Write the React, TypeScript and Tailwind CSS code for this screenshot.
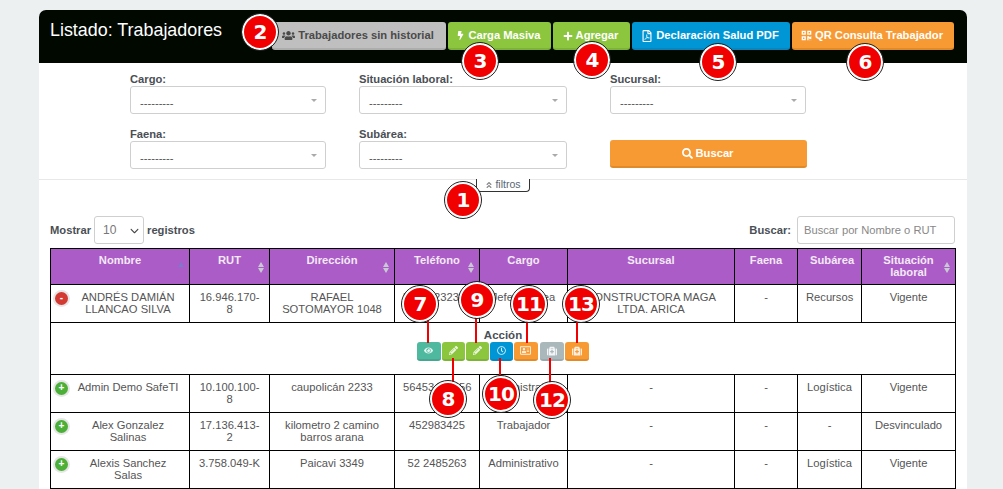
import { FaUsers, FaBolt, FaPlus, FaRegFilePdf, FaQrcode, FaSearch, FaEye, FaPencilAlt, FaRegClock, FaRegAddressCard, FaMedkit, FaAngleDoubleUp } from "react-icons/fa";
import { FaChevronDown } from "react-icons/fa6";

const font = "font-['Liberation_Sans',Arial,sans-serif]";

const FilterSelect = ({ label, width }: { label: string; width: string }) => (
    <div className={width}>
        <div className="text-[11.2px] leading-[13px] font-bold text-[#4a4f55] h-[13px]">{label}</div>
        <div className="h-[28px] rounded-[3px] border border-[#cfcfcf] bg-white pl-[9px] pr-[8px] flex items-center justify-between text-[#555]">
            <span className="text-[11.2px] relative top-[3px]">---------</span>
            <span className="w-0 h-0 border-x-[3px] border-x-transparent border-t-[3.5px] border-t-[#aaa]" />
        </div>
    </div>
);

const TopButton = ({ icon, label, className }: { icon: React.ReactNode; label: string; className: string }) => (
    <button className={`h-[28px] rounded-[3px] border-b-2 pr-[2px] pt-[1px] text-[11.2px] font-bold flex items-center justify-center gap-[3px] ${className}`}>
        {icon}
        <span>{label}</span>
    </button>
);

const Sort = ({ active }: { active?: boolean }) => (
    <span className="absolute right-[5px] top-[13px] flex flex-col gap-[1px]">
        <span className={`w-0 h-0 border-x-[3.5px] border-x-transparent border-b-[5px] ${active ? "border-b-[#7d77d0]" : "border-b-[#c9c9d6]"}`} />
        {!active && <span className="w-0 h-0 border-x-[3.5px] border-x-transparent border-t-[5px] border-t-[#c9c9d6]" />}
    </span>
);

const headers = [
    { label: "Nombre", w: "w-[139px]", sort: "active" },
    { label: "RUT", w: "w-[80px]", sort: "yes" },
    { label: "Dirección", w: "w-[125px]", sort: "yes" },
    { label: "Teléfono", w: "w-[85px]", sort: "yes" },
    { label: "Cargo", w: "w-[88px]", sort: "" },
    { label: "Sucursal", w: "w-[167px]", sort: "" },
    { label: "Faena", w: "w-[63px]", sort: "" },
    { label: "Subárea", w: "w-[64px]", sort: "" },
    { label: "Situación laboral", w: "w-[94px]", sort: "yes" },
];

const rows = [
    ["Admin Demo SafeTI", "10.100.100-8", "caupolicán 2233", "56453456456", "Administrativo", "-", "-", "Logística", "Vigente"],
    ["Alex Gonzalez Salinas", "17.136.413-2", "kilometro 2 camino barros arana", "452983425", "Trabajador", "-", "-", "-", "Desvinculado"],
    ["Alexis Sanchez Salas", "3.758.049-K", "Paicavi 3349", "52 2485263", "Administrativo", "-", "-", "Logística", "Vigente"],
];

const Toggle = ({ open }: { open?: boolean }) => (
    <span className={`absolute left-[4px] top-[7px] w-[13px] h-[13px] rounded-full ring-2 ring-[#e6e6e6] text-white text-[10px] leading-[12px] font-bold text-center ${open ? "bg-[#d33a32]" : "bg-[#4caf38]"}`}>
        {open ? "-" : "+"}
    </span>
);

const cell = "border border-black px-[8px] pt-[6px] pb-[7px] text-center align-top text-[11.2px] leading-[12px] text-[#555]";
const nameCell = "pl-[24px] pr-[8px] relative";

const ActionButton = ({ icon, className }: { icon: React.ReactNode; className: string }) => (
    <span className={`h-[19px] rounded-[3px] border-b-2 flex items-center justify-center text-white/85 text-[9px] ${className}`}>{icon}</span>
);

// numbered marks that sit over the screenshot
const marks: { n: number; x: number; y: number }[] = [
    { n: 1, x: 463, y: 200 },
    { n: 2, x: 260, y: 32 },
    { n: 3, x: 480, y: 61 },
    { n: 4, x: 592, y: 60 },
    { n: 5, x: 718, y: 62 },
    { n: 6, x: 865, y: 62 },
    { n: 7, x: 420, y: 304 },
    { n: 8, x: 448, y: 399 },
    { n: 9, x: 477, y: 300 },
    { n: 10, x: 501, y: 394 },
    { n: 11, x: 529, y: 304 },
    { n: 12, x: 552, y: 400 },
    { n: 13, x: 581, y: 304 },
];

const lines = [
    { x: 427, y: 320, h: 23 },
    { x: 452, y: 358, h: 26 },
    { x: 475, y: 315, h: 28 },
    { x: 499, y: 358, h: 18 },
    { x: 526, y: 320, h: 23 },
    { x: 549, y: 358, h: 26 },
    { x: 576, y: 320, h: 23 },
];

export default function App() {
    return (
        <div className={`relative h-[489px] overflow-hidden bg-[#ecf0f1] pt-[10px] pl-[39px] pr-[36px] ${font}`}>
            <div className="bg-white rounded-t-[7px] h-[520px]">
                <header className="h-[53px] bg-[#000800] rounded-t-[7px] flex pl-[11px] pt-[12px]">
                    <h1 className="text-white text-[17.9px] leading-[17px] w-[222px]">Listado: Trabajadores</h1>
                    <div className="flex gap-[2px]">
                        <TopButton icon={<FaUsers className="text-[13px]" />} label="Trabajadores sin historial" className="w-[174px] bg-[#bfbfbf] border-[#adadad] text-[#4a4a4a]" />
                        <TopButton icon={<FaBolt className="text-[9px]" />} label="Carga Masiva" className="w-[103px] bg-[#8cc63f] border-[#7db338] text-white" />
                        <TopButton icon={<FaPlus className="text-[10px]" />} label="Agregar" className="w-[77px] bg-[#8cc63f] border-[#7db338] text-white" />
                        <TopButton icon={<FaRegFilePdf className="text-[12px]" />} label="Declaración Salud PDF" className="w-[158px] bg-[#0096d6] border-[#0a85bd] text-white" />
                        <TopButton icon={<FaQrcode className="text-[11px]" />} label="QR Consulta Trabajador" className="w-[162px] bg-[#f89a33] border-[#e08a2a] text-white" />
                    </div>
                </header>

                <section className="h-[117px] border-b border-[#e8e8e8] pl-[91px] pt-[10px]">
                    <div className="flex">
                        <div className="w-[229px] flex flex-col gap-[14px]">
                            <FilterSelect label="Cargo:" width="w-[196px]" />
                            <FilterSelect label="Faena:" width="w-[196px]" />
                        </div>
                        <div className="w-[251px] flex flex-col gap-[14px]">
                            <FilterSelect label="Situación laboral:" width="w-[208px]" />
                            <FilterSelect label="Subárea:" width="w-[208px]" />
                        </div>
                        <div className="flex flex-col gap-[26px]">
                            <FilterSelect label="Sucursal:" width="w-[196px]" />
                            <button className="w-[197px] h-[28px] rounded-[3px] border-b-2 pr-[2px] pt-[1px] border-[#e08a2a] bg-[#f89a33] text-white text-[11.2px] font-bold flex items-center justify-center gap-[3px]">
                                <FaSearch className="text-[11px]" />
                                Buscar
                            </button>
                        </div>
                    </div>
                </section>

                <div className="flex justify-center -mt-[1px] h-[13px]">
                    <div className="w-[54px] h-[13px] bg-white border-x border-b border-[#333] rounded-b-[4px] flex items-center justify-center gap-[2px] text-[10.5px] text-[#5a6672]">
                        <FaAngleDoubleUp className="text-[8px] text-[#8a8a8a]" />
                        filtros
                    </div>
                </div>

                <div className="mx-[11px] mt-[24px] flex items-center justify-between h-[28px]">
                    <div className="flex items-center gap-[3px] text-[11.2px] font-bold text-[#4a4f55]">
                        <span>Mostrar</span>
                        <div className="w-[50px] h-[28px] rounded-[3px] border border-[#cfcfcf] pl-[8px] pr-[4px] flex items-center justify-between font-normal text-[12px] text-[#777]">
                            10
                            <FaChevronDown className="text-[9px] text-[#444]" />
                        </div>
                        <span>registros</span>
                    </div>
                    <div className="flex items-center gap-[6px] text-[11.2px] font-bold text-[#4a4f55] mr-[1px]">
                        <span>Buscar:</span>
                        <div className="w-[158px] h-[28px] rounded-[3px] border border-[#cfcfcf] pl-[6px] flex items-center font-normal text-[#888]">Buscar por Nombre o RUT</div>
                    </div>
                </div>

                <table className="ml-[11px] mt-[4px] w-[905px] table-fixed border-collapse">
                    <thead>
                        <tr className="h-[36px]">
                            {headers.map((h) => (
                                <th key={h.label} className={`${h.w} relative border border-black bg-[#ab5cc6] px-[12px] pt-[5px] align-top text-center text-[11.2px] leading-[12px] font-bold text-[#f3e9f7]`}>
                                    {h.label}
                                    {h.sort && <Sort active={h.sort === "active"} />}
                                </th>
                            ))}
                        </tr>
                    </thead>
                    <tbody>
                        <tr className="h-[38px]">
                            <td className={`${cell} ${nameCell}`}><Toggle open />ANDRÉS DAMIÁN LLANCAO SILVA</td>
                            <td className={cell}>16.946.170-8</td>
                            <td className={cell}>RAFAEL SOTOMAYOR 1048</td>
                            <td className={cell}>56453232345</td>
                            <td className={cell}>Jefe de Área</td>
                            <td className={cell}>CONSTRUCTORA MAGA LTDA. ARICA</td>
                            <td className={cell}>-</td>
                            <td className={cell}>Recursos</td>
                            <td className={cell}>Vigente</td>
                        </tr>
                        <tr className="h-[52px]">
                            <td colSpan={9} className="border border-black text-center align-top pt-[6px] text-[11.5px] leading-[12px] font-bold text-[#4a4f55]">
                                Acción
                                <div className="flex justify-center gap-[1px] mt-[1px] pr-[1px]">
                                    <ActionButton icon={<FaEye />} className="w-[24px] bg-[#4fb9a0] border-[#46a68f]" />
                                    <ActionButton icon={<FaPencilAlt />} className="w-[23px] bg-[#8cc63f] border-[#7db338]" />
                                    <ActionButton icon={<FaPencilAlt />} className="w-[23px] bg-[#8cc63f] border-[#7db338]" />
                                    <ActionButton icon={<FaRegClock />} className="w-[23px] bg-[#0096d6] border-[#0a85bd]" />
                                    <ActionButton icon={<FaRegAddressCard className="text-[11px]" />} className="w-[24px] bg-[#f89a33] border-[#e08a2a]" />
                                    <ActionButton icon={<FaMedkit className="text-[10px]" />} className="w-[24px] bg-[#aab8bc] border-[#9ba9ad] ml-[1px]" />
                                    <ActionButton icon={<FaMedkit className="text-[10px]" />} className="w-[24px] bg-[#f89a33] border-[#e08a2a]" />
                                </div>
                            </td>
                        </tr>
                        {rows.map((r) => (
                            <tr key={r[0]} className="h-[38px]">
                                {r.map((c, i) => (
                                    <td key={i} className={i === 0 ? `${cell} ${nameCell}` : cell}>
                                        {i === 0 && <Toggle />}
                                        {c}
                                    </td>
                                ))}
                            </tr>
                        ))}
                    </tbody>
                </table>
            </div>

            {lines.map((l) => (
                <span key={l.x} className="absolute w-[2px] bg-[#f00000]" style={{ left: l.x, top: l.y, height: l.h }} />
            ))}
            {marks.map((m) => (
                <span
                    key={m.n}
                    className="absolute -translate-x-1/2 -translate-y-1/2 w-[36px] h-[36px] rounded-full bg-[#f00000] border-2 border-white outline outline-[1px] outline-[#222] text-white text-[20px] font-bold flex items-center justify-center font-['DejaVu_Sans',sans-serif] tracking-[-1px]"
                    style={{ left: m.x, top: m.y }}
                >
                    {m.n}
                </span>
            ))}
        </div>
    );
}
